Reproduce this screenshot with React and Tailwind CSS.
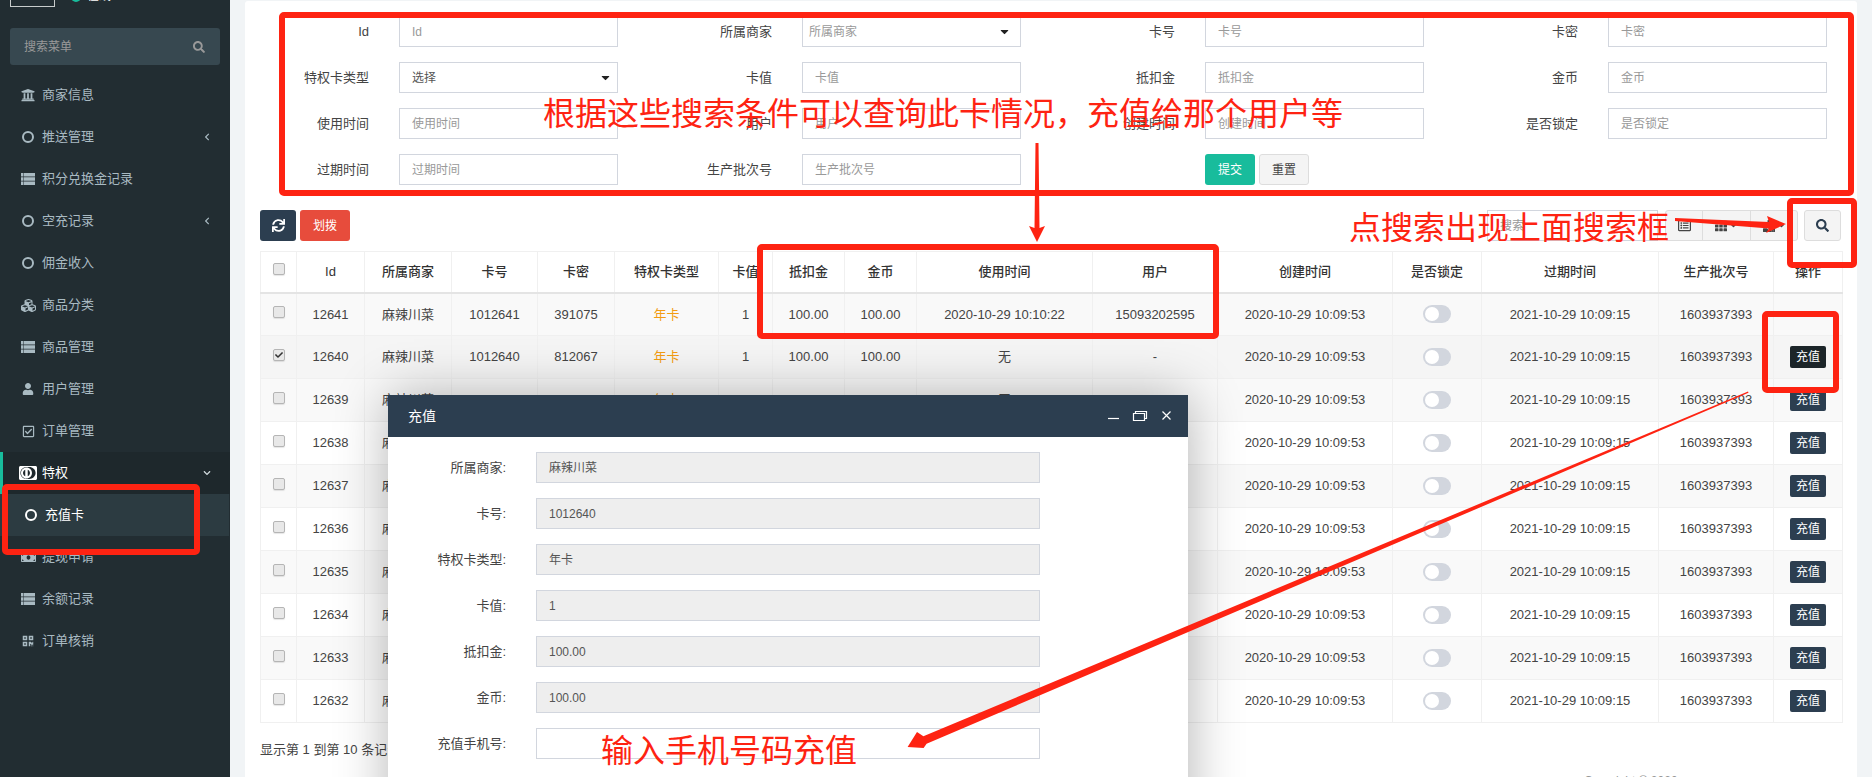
import React from 'react';
import {
  FaUniversity, FaCubes, FaUser, FaRegCheckSquare, FaMoneyBill, FaQrcode, FaCcDinersClub,
  FaSearch, FaSync, FaChevronLeft, FaChevronDown, FaRegListAlt, FaTh, FaCheck, FaCaretDown, FaDownload,
} from 'react-icons/fa';

// FA4 circle-o has a heavier ring than the FA5 one
function Ring() {
  return <span className="block w-[12px] h-[12px] rounded-full border-2 border-current" />;
}

// FA4 list icon: stacked bars with a narrow left column
function ListIcon() {
  return (
    <svg width="14" height="12" viewBox="0 0 14 12" fill="currentColor">
      <path d="M0 0h2.5v3.4H0zM3 0h11v3.4H3zM0 4.3h2.5v3.4H0zM3 4.3h11v3.4H3zM0 8.6h2.5V12H0zM3 8.6h11V12H3z" />
    </svg>
  );
}

const menu = [
  { label: '商家信息', icon: <FaUniversity size={14} /> },
  { label: '推送管理', icon: <Ring />, arrow: true },
  { label: '积分兑换金记录', icon: <ListIcon /> },
  { label: '空充记录', icon: <Ring />, arrow: true },
  { label: '佣金收入', icon: <Ring /> },
  { label: '商品分类', icon: <FaCubes size={15} /> },
  { label: '商品管理', icon: <ListIcon /> },
  { label: '用户管理', icon: <FaUser size={12} /> },
  { label: '订单管理', icon: <FaRegCheckSquare size={13} /> },
];
const menuBottom = [
  { label: '提现申请', icon: <FaMoneyBill size={15} /> },
  { label: '余额记录', icon: <ListIcon /> },
  { label: '订单核销', icon: <FaQrcode size={12} /> },
];

const filters = [
  ['Id', 'input', 'Id'], ['所属商家', 'select', '所属商家'], ['卡号', 'input', '卡号'], ['卡密', 'input', '卡密'],
  ['特权卡类型', 'select', '选择'], ['卡值', 'input', '卡值'], ['抵扣金', 'input', '抵扣金'], ['金币', 'input', '金币'],
  ['使用时间', 'input', '使用时间'], ['用户', 'input', '用户'], ['创建时间', 'input', '创建时间'], ['是否锁定', 'input', '是否锁定'],
  ['过期时间', 'input', '过期时间'], ['生产批次号', 'input', '生产批次号'],
];

const columns = [
  ['', 'w-[36px]'], ['Id', 'w-[68px]'], ['所属商家', 'w-[87px]'], ['卡号', 'w-[86px]'], ['卡密', 'w-[77px]'],
  ['特权卡类型', 'w-[104px]'], ['卡值', 'w-[54px]'], ['抵扣金', 'w-[72px]'], ['金币', 'w-[72px]'], ['使用时间', 'w-[176px]'],
  ['用户', 'w-[125px]'], ['创建时间', 'w-[175px]'], ['是否锁定', 'w-[89px]'], ['过期时间', 'w-[177px]'],
  ['生产批次号', 'w-[115px]'], ['操作', 'w-[69px]'],
];

const rows = [
  [12641, 1012641, 391075, '2020-10-29 10:10:22', '15093202595'],
  [12640, 1012640, 812067, '无', '-'],
  [12639, 1012639, 913408, '无', '-'],
  [12638, 1012638, 240716, '无', '-'],
  [12637, 1012637, 605122, '无', '-'],
  [12636, 1012636, 774391, '无', '-'],
  [12635, 1012635, 158260, '无', '-'],
  [12634, 1012634, 432907, '无', '-'],
  [12633, 1012633, 926514, '无', '-'],
  [12632, 1012632, 380645, '无', '-'],
];

const modalFields = [
  ['所属商家:', '麻辣川菜'], ['卡号:', '1012640'], ['特权卡类型:', '年卡'], ['卡值:', '1'],
  ['抵扣金:', '100.00'], ['金币:', '100.00'],
];

function MenuItem({ label, icon, arrow }) {
  return (
    <div className="h-[42px] flex items-center text-[13px] text-[#a9bac2]">
      <span className="w-[42px] flex justify-center pl-[14px]">{icon}</span>
      <span className="flex-1">{label}</span>
      {arrow && <FaChevronLeft size={8} className="mr-[19px]" />}
    </div>
  );
}

function Checkbox({ checked }) {
  return (
    <span className="mx-auto mb-[5px] w-[12px] h-[12px] flex items-center justify-center rounded-[2px] border border-[#b5b5b5] bg-[#e8e8e8] shadow-[0_1px_1px_rgba(0,0,0,0.1)]">
      {checked && <FaCheck size={8} className="text-[#333]" />}
    </span>
  );
}

function Sidebar() {
  return (
    <aside className="w-[230px] shrink-0 bg-[#222d32] h-[777px]">
      <div className="h-[28px] overflow-hidden flex items-start">
        <div className="ml-[10px] w-[45px] h-[8px] -mt-[1px] border-x border-b border-[#c8cccc]" />
        <div className="ml-[16px] w-[10px] h-[10px] -mt-[8px] rounded-full bg-[#18bc9c]" />
        <span className="ml-[6px] -mt-[11px] text-[12px] leading-[14px] text-white">在线</span>
      </div>
      <div className="mx-[10px] h-[37px] rounded-[3px] bg-[#374850] flex items-center justify-between px-[14px] text-[12px] text-[#999]">
        <span>搜索菜单</span>
        <FaSearch size={12} className="mr-[1px]" />
      </div>
      <nav className="mt-[9px]">
        {menu.map((m) => <MenuItem key={m.label} {...m} />)}
        <div className="h-[42px] flex items-center text-[13px] text-white bg-[#1e282c] border-l-[3px] border-[#18bc9c]">
          <span className="w-[39px] flex justify-center pl-[11px]"><FaCcDinersClub size={18} /></span>
          <span className="flex-1">特权</span>
          <FaChevronDown size={8} className="mr-[19px] text-[#cfd8dc]" />
        </div>
        <div className="h-[42px] mr-[1px] flex items-center text-[13px] text-white bg-[#2c3b41]">
          <span className="w-[45px] flex justify-center pl-[17px]"><Ring /></span>
          <span>充值卡</span>
        </div>
        {menuBottom.map((m) => <MenuItem key={m.label} {...m} />)}
      </nav>
    </aside>
  );
}

function FilterCell({ label, type, text }) {
  return (
    <div className="flex items-center gap-[30px]">
      <label className="w-[124px] text-right text-[13px] text-[#444]">{label}</label>
      {type === 'select' ? (
        <div className={`w-[219px] h-[31px] border border-[#d2d6de] flex items-center justify-between text-[12px] ${label === '所属商家' ? 'pl-[6px] pr-[9px] text-[#999]' : 'pl-[12px] pr-[5px] text-[#555]'}`}>
          <span>{text}</span>
          <FaCaretDown size={13} className="text-[#222]" />
        </div>
      ) : (
        <input placeholder={text} className="w-[219px] h-[31px] border border-[#d2d6de] px-[12px] text-[12px] placeholder:text-[#999] outline-none" />
      )}
    </div>
  );
}

function Table() {
  return (
    <table className="w-[1582px] table-fixed border-collapse text-[13px] text-[#444]">
      <thead>
        <tr className="h-[41px]">
          {columns.map(([title, width], i) => (
            <th key={i} className={`${width} border border-[#f0f0f0] border-b-2 border-b-[#e4e4e4] font-medium text-center text-[#333] p-0`}>
              {i === 0 ? <Checkbox /> : title}
            </th>
          ))}
        </tr>
      </thead>
      <tbody>
        {rows.map((r, i) => (
          <tr key={r[0]} className={`h-[43px] text-center ${i === 1 ? 'bg-[#f5f5f5]' : i % 2 === 0 ? 'bg-[#f9f9f9]' : 'bg-white'}`}>
            <td className="border border-[#f0f0f0]"><Checkbox checked={i === 1} /></td>
            <td className="border border-[#f0f0f0]">{r[0]}</td>
            <td className="border border-[#f0f0f0]">麻辣川菜</td>
            <td className="border border-[#f0f0f0]">{r[1]}</td>
            <td className="border border-[#f0f0f0]">{r[2]}</td>
            <td className="border border-[#f0f0f0] text-[#f39c12]">年卡</td>
            <td className="border border-[#f0f0f0]">1</td>
            <td className="border border-[#f0f0f0]">100.00</td>
            <td className="border border-[#f0f0f0]">100.00</td>
            <td className="border border-[#f0f0f0]">{r[3]}</td>
            <td className="border border-[#f0f0f0]">{r[4]}</td>
            <td className="border border-[#f0f0f0]">2020-10-29 10:09:53</td>
            <td className="border border-[#f0f0f0]">
              <span className="mx-auto flex items-center w-[28px] h-[18px] rounded-full bg-[#d2d6de] pl-[2px]">
                <span className="w-[14px] h-[14px] rounded-full bg-white" />
              </span>
            </td>
            <td className="border border-[#f0f0f0]">2021-10-29 10:09:15</td>
            <td className="border border-[#f0f0f0]">1603937393</td>
            <td className="border border-[#f0f0f0]">
              {r[3] === '无' && (
                <span className={`mx-auto flex items-center justify-center w-[36px] h-[22px] rounded-[2px] text-[12px] text-white ${i === 1 ? 'bg-[#1c2529]' : 'bg-[#2c3e50]'}`}>充值</span>
              )}
            </td>
          </tr>
        ))}
      </tbody>
    </table>
  );
}

function Modal() {
  return (
    <div className="absolute left-[388px] top-[395px] w-[800px] h-[460px] bg-white shadow-[1px_1px_50px_rgba(0,0,0,0.3)]">
      <div className="h-[42px] bg-[#2c3e50] flex items-center pl-[20px] pr-[16px] text-[14px] text-white">
        <span className="flex-1">充值</span>
        <svg width="64" height="16" viewBox="0 0 64 16" fill="none" stroke="#fff" strokeWidth="1.2">
          <path d="M0 10.5h11" />
          <path d="M25.5 5.5h11v7h-11zM27.5 5V3.5h11v7h-2" />
          <path d="M54.5 3.5l8 8M62.5 3.5l-8 8" />
        </svg>
      </div>
      <div className="pt-[15px] flex flex-col gap-[15px]">
        {modalFields.map(([label, value]) => (
          <div key={label} className="flex items-center gap-[30px]">
            <label className="w-[118px] text-right text-[13px] text-[#444]">{label}</label>
            <div className="w-[504px] h-[31px] border border-[#d2d6de] bg-[#eeeeee] px-[12px] flex items-center text-[12px] text-[#555]">{value}</div>
          </div>
        ))}
        <div className="flex items-center gap-[30px]">
          <label className="w-[118px] text-right text-[13px] text-[#444]">充值手机号:</label>
          <input className="w-[504px] h-[31px] border border-[#d2d6de] px-[12px] text-[12px] outline-none" />
        </div>
      </div>
    </div>
  );
}

function Annotations() {
  const boxes = [
    'left-[279px] top-[12px] w-[1575px] h-[184px]',
    'left-[757px] top-[244px] w-[462px] h-[95px]',
    'left-[1787px] top-[198px] w-[70px] h-[70px]',
    'left-[1762px] top-[311px] w-[77px] h-[82px]',
    'left-[2px] top-[484px] w-[198px] h-[71px]',
  ];
  return (
    <>
      {boxes.map((b) => (
        <div key={b} className={`absolute ${b} border-[6px] border-[#fe2312] rounded-[5px]`} />
      ))}
      <svg width="1872" height="777" viewBox="0 0 1872 777" className="absolute left-0 top-0" fill="#fe2312">
        <polygon points="1035.5,143 1038.5,143 1039.5,228 1045,226 1037,242 1029,226 1034.5,228" />
        <polygon points="1675,218 1769,222 1767,216 1786,224 1766,233 1769,228.5 1675,221" />
        <polygon points="1748,391.5 923.4,736.3 917,732 907.6,747 923.6,748 926.6,743.7 1748.5,392.8" />
      </svg>
      <div className="absolute left-[543px] top-[92px] text-[32px] leading-[44px] text-[#fe2312] whitespace-nowrap">根据这些搜索条件可以查询此卡情况，充值给那个用户等</div>
      <div className="absolute left-[1349px] top-[206px] text-[32px] leading-[44px] text-[#fe2312] whitespace-nowrap">点搜索出现上面搜索框</div>
      <div className="absolute left-[601px] top-[729px] text-[32px] leading-[44px] text-[#fe2312] whitespace-nowrap">输入手机号码充值</div>
    </>
  );
}

export default function App() {
  return (
    <div className="relative flex w-[1872px] h-[777px] overflow-hidden bg-[#f1f4f6] font-['Liberation_Sans','Noto_Sans_CJK_SC',sans-serif]">
      <Sidebar />
      <main className="ml-[15px] mt-[1px] w-[1612px] h-[776px] bg-white rounded-t-[3px] shrink-0 overflow-hidden">
        <div className="pt-[15px] grid grid-cols-[403px_403px_403px_403px] gap-y-[15px]">
          {filters.map(([label, type, text]) => (
            <FilterCell key={label} label={label} type={type} text={text} />
          ))}
          <div className="col-start-3 flex items-center gap-[4px] pl-[154px] text-[12px]">
            <button className="w-[50px] h-[31px] rounded-[3px] bg-[#18bc9c] text-white">提交</button>
            <button className="w-[50px] h-[31px] rounded-[3px] bg-[#f4f4f4] border border-[#ddd] text-[#444]">重置</button>
          </div>
        </div>

        <div className="mt-[25px] px-[15px] flex items-center h-[31px]">
          <button className="w-[36px] h-[31px] rounded-[3px] bg-[#2c3e50] flex items-center justify-center text-white"><FaSync size={13} /></button>
          <button className="ml-[4px] w-[50px] h-[31px] rounded-[3px] bg-[#e74c3c] text-white text-[12px]">划拨</button>
          <div className="flex-1" />
          <input placeholder="搜索" className="w-[171px] h-[31px] border border-[#d2d6de] px-[12px] text-[12px] placeholder:text-[#999] outline-none" />
          <div className="ml-[7px] w-[133px] h-[31px] flex rounded-[3px] border border-[#ddd] bg-[#f4f4f4] text-[#444] text-[12px]">
            <span className="w-[37px] flex items-center justify-center border-r border-[#ddd]"><FaRegListAlt size={13} /></span>
            <span className="w-[48px] flex items-center justify-center gap-[2px] border-r border-[#ddd]"><FaTh size={12} /><FaCaretDown size={9} /></span>
            <span className="flex-1 flex items-center justify-center gap-[2px]"><FaDownload size={12} /><FaCaretDown size={9} /></span>
          </div>
          <button className="ml-[6px] mr-[1px] w-[37px] h-[31px] rounded-[3px] border border-[#ddd] bg-[#f4f4f4] flex items-center justify-center text-[#2c3e50]"><FaSearch size={13} /></button>
        </div>

        <div className="mt-[10px] px-[15px]">
          <Table />
        </div>
        <div className="mt-[18px] px-[15px] text-[13px] leading-[18px] text-[#444]">显示第 1 到第 10 条记录，总共 10 条记录</div>
        <div className="mt-[15px] pl-[1339px] text-[12px] leading-[14px] text-[#999]">Copyright © 2020</div>
      </main>
      <Modal />
      <Annotations />
    </div>
  );
}
